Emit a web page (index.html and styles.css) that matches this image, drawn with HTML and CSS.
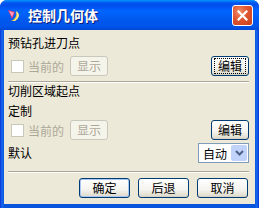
FILE: index.html
```html
<!DOCTYPE html>
<html lang="zh">
<head>
    <meta charset="UTF-8">
    <title>控制几何体</title>
    <link rel="stylesheet" href="styles.css">
</head>
<body>
    <div class="window">
        <div class="titlebar">
            <svg class="app-icon" width="15" height="15" viewBox="0 0 15 15">
                <path d="M1 2 L8 4 L5 11 Z" fill="#e8326e"/>
                <path d="M2 3 L7 4.5 L5 9 Z" fill="#ff9ab8"/>
                <path d="M9 3 C13 5 13 10 8 13 L4 13 C9 11 10 7 9 3 Z" fill="#f6d44a"/>
                <path d="M9.5 4 C12 6 11.5 10 7.5 12.5" stroke="#fff8c0" stroke-width="1" fill="none"/>
            </svg>
            <span class="title">控制几何体</span>
            <button class="close">
                <svg width="11" height="11" viewBox="0 0 11 11">
                    <path d="M1.5 1.5 L9.5 9.5 M9.5 1.5 L1.5 9.5" stroke="#fff" stroke-width="2.2" stroke-linecap="square"/>
                </svg>
            </button>
        </div>
        <div class="client">
            <div class="label first">预钻孔进刀点</div>
            <div class="ctrl-row">
                <span class="check disabled"></span>
                <span class="check-text disabled">当前的</span>
                <span class="btn small disabled">显示</span>
                <span class="spacer"></span>
                <span class="btn small focused"><span class="focus-ring">编辑</span></span>
            </div>
            <div class="sep"></div>
            <div class="label">切削区域起点</div>
            <div class="label second">定制</div>
            <div class="ctrl-row tight">
                <span class="check disabled"></span>
                <span class="check-text disabled">当前的</span>
                <span class="btn small disabled">显示</span>
                <span class="spacer"></span>
                <span class="btn small">编辑</span>
            </div>
            <div class="select-row">
                <span class="label">默认</span>
                <span class="select">
                    <span class="select-value">自动</span>
                    <span class="select-arrow">
                        <svg width="9" height="6" viewBox="0 0 9 6">
                            <path d="M1 1 L4.5 4.5 L8 1" stroke="#4d6185" stroke-width="2" fill="none"/>
                        </svg>
                    </span>
                </span>
            </div>
            <div class="sep bottom"></div>
            <div class="footer">
                <span class="btn wide default">确定</span>
                <span class="btn wide">后退</span>
                <span class="btn wide">取消</span>
            </div>
        </div>
    </div>
</body>
</html>
```

FILE: styles.css
```css
body {
    margin: 0;
    font-family: "Noto Sans CJK SC", "Liberation Sans", sans-serif;
    font-size: 12px;
    color: #000;
}
.window {
    width: 259px;
    height: 208px;
    box-sizing: border-box;
    display: flex;
    flex-direction: column;
    background: linear-gradient(to right, #0831d9 0, #166aee 2px, #0855dd 4px, #0855dd 255px, #166aee 257px, #0831d9 259px);
    border-radius: 7px 7px 0 0;
    overflow: hidden;
}
.titlebar {
    height: 30px;
    flex: none;
    display: flex;
    align-items: center;
    padding: 0 6px 0 7px;
    background: linear-gradient(to bottom, #0997ff 0, #0053ee 3px, #0050ee 6px, #0066ff 11px, #0058ee 20px, #0055eb 26px, #0047d6 30px);
}
.app-icon {
    flex: none;
    margin-top: 1px;
}
.title {
    margin-left: 6px;
    color: #fff;
    font-weight: bold;
    font-size: 14px;
    text-shadow: 1px 1px 0 #0a1e78;
    flex: 1;
}
.close {
    width: 21px;
    height: 21px;
    padding: 0;
    border: 1px solid #fff;
    border-radius: 3px;
    background: radial-gradient(circle at 35% 30%, #f08c6a 0, #e0552f 45%, #c7401b 100%);
    display: flex;
    align-items: center;
    justify-content: center;
}
.client {
    flex: 1;
    margin: 0 4px 4px;
    background: #ece9d8;
    display: flex;
    flex-direction: column;
    padding: 0 6px 0 4px;
}
.label {
    line-height: 16px;
    height: 16px;
}
.label.first {
    margin-top: 5px;
}
.label.second {
    margin-top: 4px;
}
.ctrl-row {
    display: flex;
    align-items: center;
    height: 20px;
    margin-top: 5px;
}
.ctrl-row.tight {
    margin-top: 1px;
}
.check {
    width: 11px;
    height: 11px;
    border: 1px solid #cac8bb;
    background: #fff;
    margin-left: 3px;
}
.check-text {
    margin-left: 4px;
}
.disabled {
    color: #aca899;
}
.spacer {
    flex: 1;
}
.btn {
    box-sizing: border-box;
    display: inline-flex;
    align-items: center;
    justify-content: center;
    height: 20px;
    line-height: 12px;
    border: 1px solid #003c74;
    border-radius: 3px;
    background: linear-gradient(to bottom, #ffffff 0, #f4f3ee 60%, #dcd8c8 100%);
    box-shadow: inset 0 -1px 0 #d6d0c5;
}
.btn.small {
    width: 38px;
}
.btn.small.disabled {
    margin-left: 6px;
    border-color: #c9c7ba;
    background: #f5f4ea;
    box-shadow: none;
}
.btn.focused {
    padding: 1px 2px;
}
.focus-ring {
    box-sizing: border-box;
    display: flex;
    align-items: center;
    justify-content: center;
    width: 100%;
    height: 100%;
    border: 1px dotted #000;
}
.btn.default {
    box-shadow: inset 0 0 0 1px #a9c5f1, inset 0 -1px 0 #d6d0c5;
}
.btn.wide {
    width: 51px;
    height: 20px;
    margin-left: 8px;
}
.select-row {
    display: flex;
    align-items: center;
    justify-content: space-between;
    margin-top: 3px;
    height: 20px;
}
.select {
    box-sizing: border-box;
    width: 51px;
    height: 20px;
    border: 1px solid #7f9db9;
    background: #fff;
    display: flex;
    align-items: center;
    padding: 1px;
}
.select-value {
    flex: 1;
    padding-left: 3px;
}
.select-arrow {
    width: 16px;
    height: 16px;
    background: #c1d3fb;
    border-radius: 2px;
    display: flex;
    align-items: center;
    justify-content: center;
}
.sep {
    height: 1px;
    background: #aca899;
    border-bottom: 1px solid #fff;
    margin-top: 5px;
}
.sep.bottom {
    margin-top: 8px;
}
.footer {
    display: flex;
    justify-content: flex-end;
    margin-top: 5px;
    padding-right: 1px;
}
```
